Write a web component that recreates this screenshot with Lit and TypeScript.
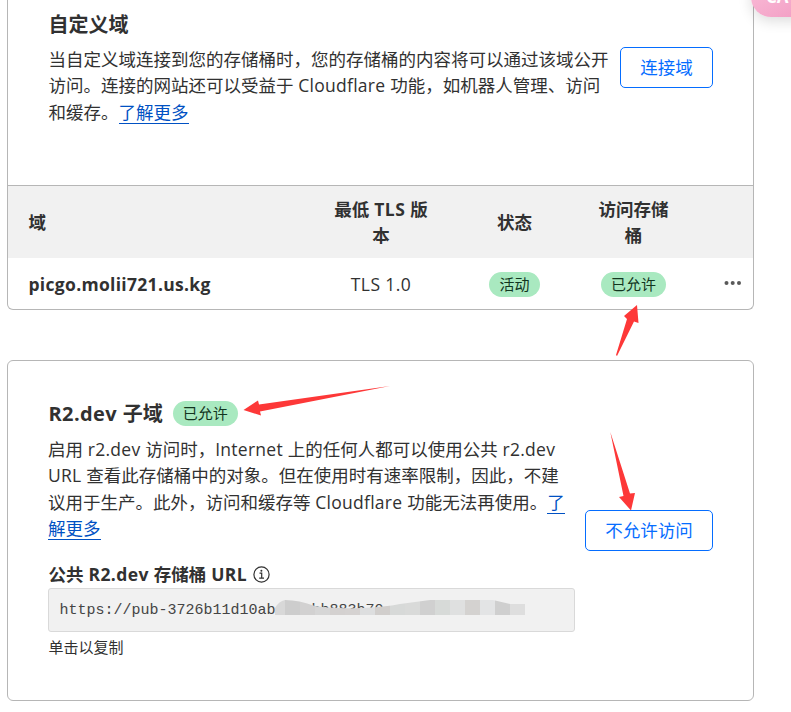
import { LitElement, html, svg, css, nothing } from "lit";
import { customElement } from "lit/decorators.js";

// Splits a string so that Latin runs can be spaced independently of CJK text.
const mix = (text: string) =>
  text
    .split(/([A-Za-z0-9.][A-Za-z0-9. ]*[A-Za-z0-9]|[ ])/)
    .filter((part) => part !== "")
    .map((part) => (/^[\x00-\x7f]+$/.test(part) ? html`<span class="latin">${part}</span>` : part));

const lines = (rows: string[], link: string, rest = "") => html`
  ${rows.map((row, i) =>
    i < rows.length - 1
      ? html`<span class="line">${mix(row)}</span>`
      : html`<span class="line">${mix(row)}<a class="link">${link}</a></span>`
  )}
  ${rest ? html`<span class="line"><a class="link">${rest}</a></span>` : nothing}
`;

const arrows = [
  "637,305 638.5,323 634,321.5 617,356 616,355 627,319 624,316",
  "243.5,410 258,400.5 259,404.5 390,386 260,411.5 261,415.5",
  "610.3,432 630,493.5 635,493 631,510.5 619,497 623.5,496",
];

// Left edge, width and fill of each block over the redacted part of the address.
const mosaic: [number, number, string][] = [
  [0, 10, "#d8d8d8"],
  [10, 15, "#cdcdcd"],
  [25, 15, "#d2d1d1"],
  [40, 15, "#d6d6d6"],
  [55, 15, "#d4d1d0"],
  [70, 15, "#d5d2d1"],
  [85, 15, "#dddedf"],
  [100, 15, "#d1cecc"],
  [115, 15, "#d7d9d8"],
  [130, 15, "#d9dad9"],
  [145, 15, "#d0d0d0"],
  [160, 15, "#d7dad8"],
  [175, 15, "#dfe0e0"],
  [190, 15, "#d4d2d0"],
  [205, 15, "#e3e4e5"],
  [220, 15, "#cfcfcf"],
  [235, 15, "#dedede"],
];

@customElement("app-root")
export class AppRoot extends LitElement {
  static styles = css`
    :host {
      display: block;
      position: relative;
      width: 791px;
      height: 712px;
      overflow: hidden;
      background: #fff;
      color: #313131;
      font: 17.5px/26.25px "Open Sans", "Noto Sans CJK SC", sans-serif;
      box-sizing: border-box;
      padding-left: 7px;
    }
    * {
      box-sizing: border-box;
    }
    .card {
      width: 747px;
      border: 1px solid #b6b6b6;
      border-radius: 6px;
      background: #fff;
    }
    .domains {
      height: 310px;
      border-top: 0;
      border-radius: 0 0 6px 6px;
      overflow: hidden;
    }
    .intro {
      height: 186px;
      border-bottom: 1px solid #b6b6b6;
      padding: 9px 40px 0 40.5px;
      display: flex;
      justify-content: space-between;
    }
    h2 {
      margin: 0;
      font-size: 20px;
      line-height: 31px;
      font-weight: 700;
      white-space: nowrap;
    }
    .copy {
      margin: 6px 0 0;
    }
    .subdomain .copy {
      margin-top: 7px;
    }
    .line {
      display: block;
      height: 26.25px;
      white-space: pre;
    }
    .latin {
      letter-spacing: 0.26px;
    }
    h2 .latin,
    .label .latin {
      letter-spacing: 0.4px;
    }
    .name .latin {
      letter-spacing: 0.3px;
    }
    .tls .latin {
      letter-spacing: 0.4px;
    }
    .link {
      color: #0051c3;
      display: inline-block;
      height: 23px;
      line-height: 23px;
      border-bottom: 1px solid #0051c3;
    }
    .button {
      flex: none;
      height: 41px;
      border: 1px solid #056dff;
      border-radius: 5px;
      background: #fff;
      color: #056dff;
      font: inherit;
      line-height: 39px;
      padding: 0 18px;
      white-space: nowrap;
    }
    .connect {
      width: 93px;
      margin-top: 38px;
    }
    .row {
      display: grid;
      grid-template-columns: 304px 138px 129px 109px 64px;
      align-items: center;
      text-align: center;
    }
    .row > :first-child {
      text-align: left;
      padding-left: 20.5px;
    }
    .head {
      height: 72px;
      background: #f1f1f1;
      font-weight: 700;
    }
    .body {
      height: 51px;
    }
    .name,
    .body .tls {
      font-weight: 700;
      padding-top: 1px;
    }
    .body .tls {
      font-weight: 400;
    }
    .pill {
      display: inline-block;
      height: 25px;
      border-radius: 13px;
      background: #a9e9c0;
      color: #12351f;
      font-size: 15px;
      line-height: 25px;
      padding: 0 10px;
      font-weight: 400;
      vertical-align: middle;
    }
    .dots {
      display: block;
      margin: -2px 0 0 36px;
    }
    .subdomain {
      height: 341px;
      margin-top: 50px;
      padding: 37px 40px 0 40px;
    }
    .title {
      display: flex;
      align-items: center;
      gap: 10px;
      height: 31px;
      padding-left: 0.5px;
    }
    .split {
      display: flex;
      justify-content: space-between;
      height: 126px;
    }
    .deny {
      width: 128px;
      margin-top: 81px;
    }
    .label {
      display: flex;
      align-items: center;
      gap: 6px;
      height: 26px;
      margin-top: 6px;
      padding-left: 0.5px;
      font-weight: 700;
    }
    .url {
      position: relative;
      width: 527px;
      height: 44px;
      border: 1px solid #d9d9d9;
      border-radius: 3px;
      background: #f1f1f1;
      color: #444;
      margin-top: 1px;
      padding-left: 10.5px;
      font: 15px/43px "Liberation Mono", monospace;
      white-space: pre;
    }
    .mosaic {
      position: absolute;
      left: 226px;
      top: 11px;
    }
    .hint {
      font-size: 15px;
      line-height: 22px;
      margin-top: 4px;
      padding-left: 0.5px;
    }
    .arrows {
      position: absolute;
      left: 0;
      top: 0;
      pointer-events: none;
    }
    .sticker {
      position: absolute;
      left: 751px;
      top: -24px;
      width: 80px;
      height: 41px;
      border-radius: 20px;
      background: linear-gradient(150deg, #fbc0da, #f096bf);
      box-shadow: 0 4px 14px rgba(0, 0, 0, 0.14);
      color: #fff;
      font: 700 17px/41px "Open Sans", sans-serif;
      padding: 0 0 0 15px;
    }
  `;

  render() {
    return html`
      <section class="card domains">
        <div class="intro">
          <div>
            <h2>自定义域</h2>
            <div class="copy">
              ${lines(
                [
                  "当自定义域连接到您的存储桶时，您的存储桶的内容将可以通过该域公开",
                  "访问。连接的网站还可以受益于 Cloudflare 功能，如机器人管理、访问",
                  "和缓存。",
                ],
                "了解更多"
              )}
            </div>
          </div>
          <button class="button connect">连接域</button>
        </div>
        <div class="row head">
          <div>域</div>
          <div class="tls">${mix("最低 TLS 版")}<br />本</div>
          <div>状态</div>
          <div>访问存储<br />桶</div>
          <div></div>
        </div>
        <div class="row body">
          <div class="name"><span class="latin">picgo.molii721.us.kg</span></div>
          <div class="tls"><span class="latin">TLS 1.0</span></div>
          <div><span class="pill">活动</span></div>
          <div><span class="pill">已允许</span></div>
          <div>
            <svg class="dots" width="18" height="6" fill="#595959">
              <circle cx="2.5" cy="3" r="2" />
              <circle cx="8.7" cy="3" r="2" />
              <circle cx="15" cy="3" r="2" />
            </svg>
          </div>
        </div>
      </section>

      <section class="card subdomain">
        <div class="title">
          <h2>${mix("R2.dev 子域")}</h2>
          <span class="pill">已允许</span>
        </div>
        <div class="split">
          <div class="copy">
            ${lines(
              [
                "启用 r2.dev 访问时，Internet 上的任何人都可以使用公共 r2.dev",
                "URL 查看此存储桶中的对象。但在使用时有速率限制，因此，不建",
                "议用于生产。此外，访问和缓存等 Cloudflare 功能无法再使用。",
              ],
              "了",
              "解更多"
            )}
          </div>
          <button class="button deny">不允许访问</button>
        </div>
        <div class="label">
          <span>${mix("公共 R2.dev 存储桶 URL")}</span>
          <svg width="17" height="17" viewBox="0 0 17 17" fill="none" stroke="#313131" stroke-width="1.2">
            <circle cx="8.5" cy="8.5" r="7.6" />
            <path d="M6.5 7.2H8.7V12M6.2 12.2H11" />
            <circle cx="8.4" cy="4.7" r="1" fill="#313131" stroke="none" />
          </svg>
        </div>
        <div class="url">https://pub-3726b11d10ab<span>    bb883b70</span>
          <svg class="mosaic" width="252" height="16">
            <defs>
              <clipPath id="smear">
                <path d="M0 15V8Q4 1 10 0Q24 0 40 6Q60 9 85 8Q110 7 125 4L155 0H218L235 4H251V15Z" />
              </clipPath>
            </defs>
            <g clip-path="url(#smear)">
              ${mosaic.map(([x, w, fill]) => svg`<rect x=${x} y="0" width=${w} height="15" fill=${fill} />`)}
            </g>
          </svg>
        </div>
        <div class="hint">单击以复制</div>
      </section>

      <svg class="arrows" width="791" height="712" fill="#fd3838">
        ${arrows.map((points) => svg`<polygon points=${points} />`)}
      </svg>
      <div class="sticker">CA</div>
    `;
  }
}
